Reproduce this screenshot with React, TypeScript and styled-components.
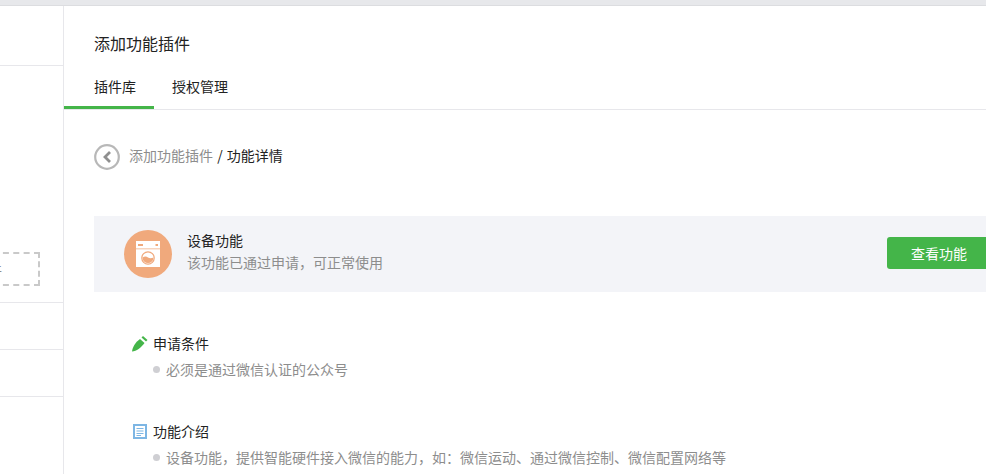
import React from 'react';
import styled, { createGlobalStyle } from 'styled-components';

const GlobalStyle = createGlobalStyle`
    html, body {
        margin: 0;
        padding: 0;
        background: #fff;
        overflow: hidden;
    }

    body {
        font-family: "Noto Sans CJK SC", "Liberation Sans", sans-serif;
        color: #222;
    }
`;

const Page = styled.div`
    width: 986px;
    height: 474px;
    overflow: hidden;
    display: flex;
    flex-direction: column;
`;

const TopStrip = styled.div`
    height: 5px;
    flex: none;
    background: #e7e8eb;
    border-bottom: 1px solid #dcdde0;
`;

const Body = styled.div`
    flex: 1;
    display: flex;
    min-height: 0;
`;

const Sidebar = styled.aside`
    width: 63px;
    flex: none;
    border-right: 1px solid #e7e7eb;
    overflow: hidden;
    display: flex;
    flex-direction: column;
`;

const SideRow = styled.div<{ $height: number }>`
    height: ${(p) => p.$height}px;
    flex: none;
    box-sizing: border-box;
    border-bottom: 1px solid #e7e7eb;
    display: flex;
    align-items: flex-end;
`;

const DashedButton = styled.div`
    width: 120px;
    height: 34px;
    margin: 0 0 16px -80px;
    box-sizing: border-box;
    border: 2px dashed #c9c9c9;
    color: #8d8d8d;
    font-size: 14px;
    line-height: 30px;
    text-align: right;
    padding-right: 36px;
    flex: none;
`;

const Main = styled.main`
    flex: 1;
    min-width: 0;
    overflow: hidden;
`;

const Title = styled.h2`
    margin: 0;
    padding: 25px 0 0 30px;
    height: 50px;
    box-sizing: border-box;
    font-size: 16px;
    line-height: 24px;
    font-weight: 400;
    color: #222;
`;

const Tabs = styled.div`
    display: flex;
    height: 54px;
    box-sizing: border-box;
    border-bottom: 1px solid #e7e7eb;
`;

const Tab = styled.div<{ $active?: boolean }>`
    height: 53px;
    box-sizing: border-box;
    width: ${(p) => (p.$active ? '90px' : 'auto')};
    padding: 19px 0 0 ${(p) => (p.$active ? '30px' : '18px')};
    font-size: 14px;
    line-height: 22px;
    color: #222;
    border-bottom: ${(p) => (p.$active ? '3px solid #44b549' : 'none')};
`;

const Content = styled.div`
    padding: 34px 0 0 30px;
    width: 1000px;
`;

const Crumbs = styled.div`
    display: flex;
    align-items: center;
    gap: 9px;
    height: 26px;
    font-size: 14px;
    line-height: 26px;
    color: #222;
`;

const CrumbText = styled.span`
    margin-top: -4px;
`;

const CrumbLink = styled.span`
    color: #8d8d8d;
`;

const CrumbSep = styled.span`
    margin: 0 1px;
`;

const Notice = styled.section`
    margin-top: 46px;
    height: 76px;
    background: #f3f4f8;
    display: flex;
    align-items: center;
    padding-left: 30px;
    gap: 15px;
`;

const Badge = styled.div`
    width: 48px;
    height: 48px;
    flex: none;
    border-radius: 50%;
    background: #f0a97c;
    display: flex;
    align-items: center;
    justify-content: center;
`;

const NoticeText = styled.div`
    width: 700px;
    flex: none;
    padding-bottom: 6px;
    font-size: 14px;
    line-height: 22px;
    color: #222;
`;

const NoticeHint = styled.div`
    color: #8d8d8d;
`;

const PrimaryButton = styled.button`
    width: 110px;
    height: 32px;
    flex: none;
    margin: 0 0 2px -15px;
    padding: 0 0 0 24px;
    border: 0;
    border-radius: 3px;
    background: #44b549;
    color: #fff;
    font: inherit;
    font-size: 14px;
    text-align: left;
`;

const Block = styled.section<{ $top: number }>`
    margin: ${(p) => p.$top}px 0 0 37px;
`;

const BlockHead = styled.div`
    display: flex;
    align-items: center;
    height: 24px;
    gap: 5px;
    font-size: 14px;
    line-height: 24px;
    color: #222;
`;

const HeadIcon = styled.svg`
    width: 17px;
    height: 17px;
    flex: none;
`;

const DocGlyph = styled.svg`
    width: 14px;
    height: 15px;
    margin: 0 1px 0 2px;
    flex: none;
`;

const BlockItem = styled.div`
    display: flex;
    align-items: center;
    gap: 6px;
    margin: 2px 0 0 22px;
    height: 24px;
    font-size: 14px;
    line-height: 24px;
    color: #8d8d8d;
`;

const Dot = styled.i`
    width: 7px;
    height: 7px;
    border-radius: 50%;
    background: #cfcfd3;
    flex: none;
`;

function BackIcon() {
    return (
        <svg width="26" height="26" viewBox="0 0 26 26" style={{ flex: 'none' }}>
            <circle cx="13" cy="13" r="11.8" fill="none" stroke="#b8b8b8" strokeWidth="2.2" />
            <path d="M16 8 11 13l5 5" fill="none" stroke="#8f8f8f" strokeWidth="2.8" />
        </svg>
    );
}

function WasherIcon() {
    return (
        <svg width="24" height="26" viewBox="0 0 24 26">
            <path d="M0 0h24v26H0z" fill="#fff" />
            <path d="M2 3h5v2H2zM19.5 3h2.5v2h-2.5zM0 7.500h24v.8H0z" fill="#f0a97c" />
            <circle cx="12" cy="17" r="6.200" fill="none" stroke="#f0a97c" strokeWidth="1.200" />
            <path d="M6.500 16.500c2.500-1.500 4-1 5.500 0s3.500 1 5.500 0A5.500 5.500 0 0 1 6.500 16.500z" fill="#f0a97c" />
        </svg>
    );
}

function CarrotIcon() {
    return (
        <HeadIcon viewBox="0 0 17 17">
            <path d="M1 16.500C1.500 12.500 4 7.500 9 4l4.500 4c-3.500 5-8 8-12.500 8.500z" fill="#44b549" />
            <path d="M10.500 2.500 12 1l4.500 4L15 6.500z" fill="#44b549" />
        </HeadIcon>
    );
}

function DocIcon() {
    return (
        <DocGlyph viewBox="0 0 14 15">
            <path d="M0 0h14v15H0z" fill="#7db6e4" />
            <path d="M2 2h10v11H2z" fill="#fff" />
            <path d="M3.500 4h7v1h-7zM3.500 6.500h7v1h-7zM3.500 9h7v1h-7zM3.500 11h4.500v1H3.500z" fill="#7db6e4" />
        </DocGlyph>
    );
}

export default function App() {
    return (
        <Page>
            <GlobalStyle />
            <TopStrip />
            <Body>
                <Sidebar>
                    <SideRow $height={60} />
                    <SideRow $height={237}>
                        <DashedButton>件</DashedButton>
                    </SideRow>
                    <SideRow $height={47} />
                    <SideRow $height={47} />
                </Sidebar>
                <Main>
                    <Title>添加功能插件</Title>
                    <Tabs>
                        <Tab $active>插件库</Tab>
                        <Tab>授权管理</Tab>
                    </Tabs>
                    <Content>
                        <Crumbs>
                            <BackIcon />
                            <CrumbText>
                                <CrumbLink>添加功能插件</CrumbLink> <CrumbSep>/</CrumbSep> 功能详情
                            </CrumbText>
                        </Crumbs>
                        <Notice>
                            <Badge>
                                <WasherIcon />
                            </Badge>
                            <NoticeText>
                                设备功能
                                <NoticeHint>该功能已通过申请，可正常使用</NoticeHint>
                            </NoticeText>
                            <PrimaryButton>查看功能</PrimaryButton>
                        </Notice>
                        <Block $top={39}>
                            <BlockHead>
                                <CarrotIcon />
                                申请条件
                            </BlockHead>
                            <BlockItem>
                                <Dot />
                                必须是通过微信认证的公众号
                            </BlockItem>
                        </Block>
                        <Block $top={38}>
                            <BlockHead>
                                <DocIcon />
                                功能介绍
                            </BlockHead>
                            <BlockItem>
                                <Dot />
                                设备功能，提供智能硬件接入微信的能力，如：微信运动、通过微信控制、微信配置网络等
                            </BlockItem>
                        </Block>
                    </Content>
                </Main>
            </Body>
        </Page>
    );
}
